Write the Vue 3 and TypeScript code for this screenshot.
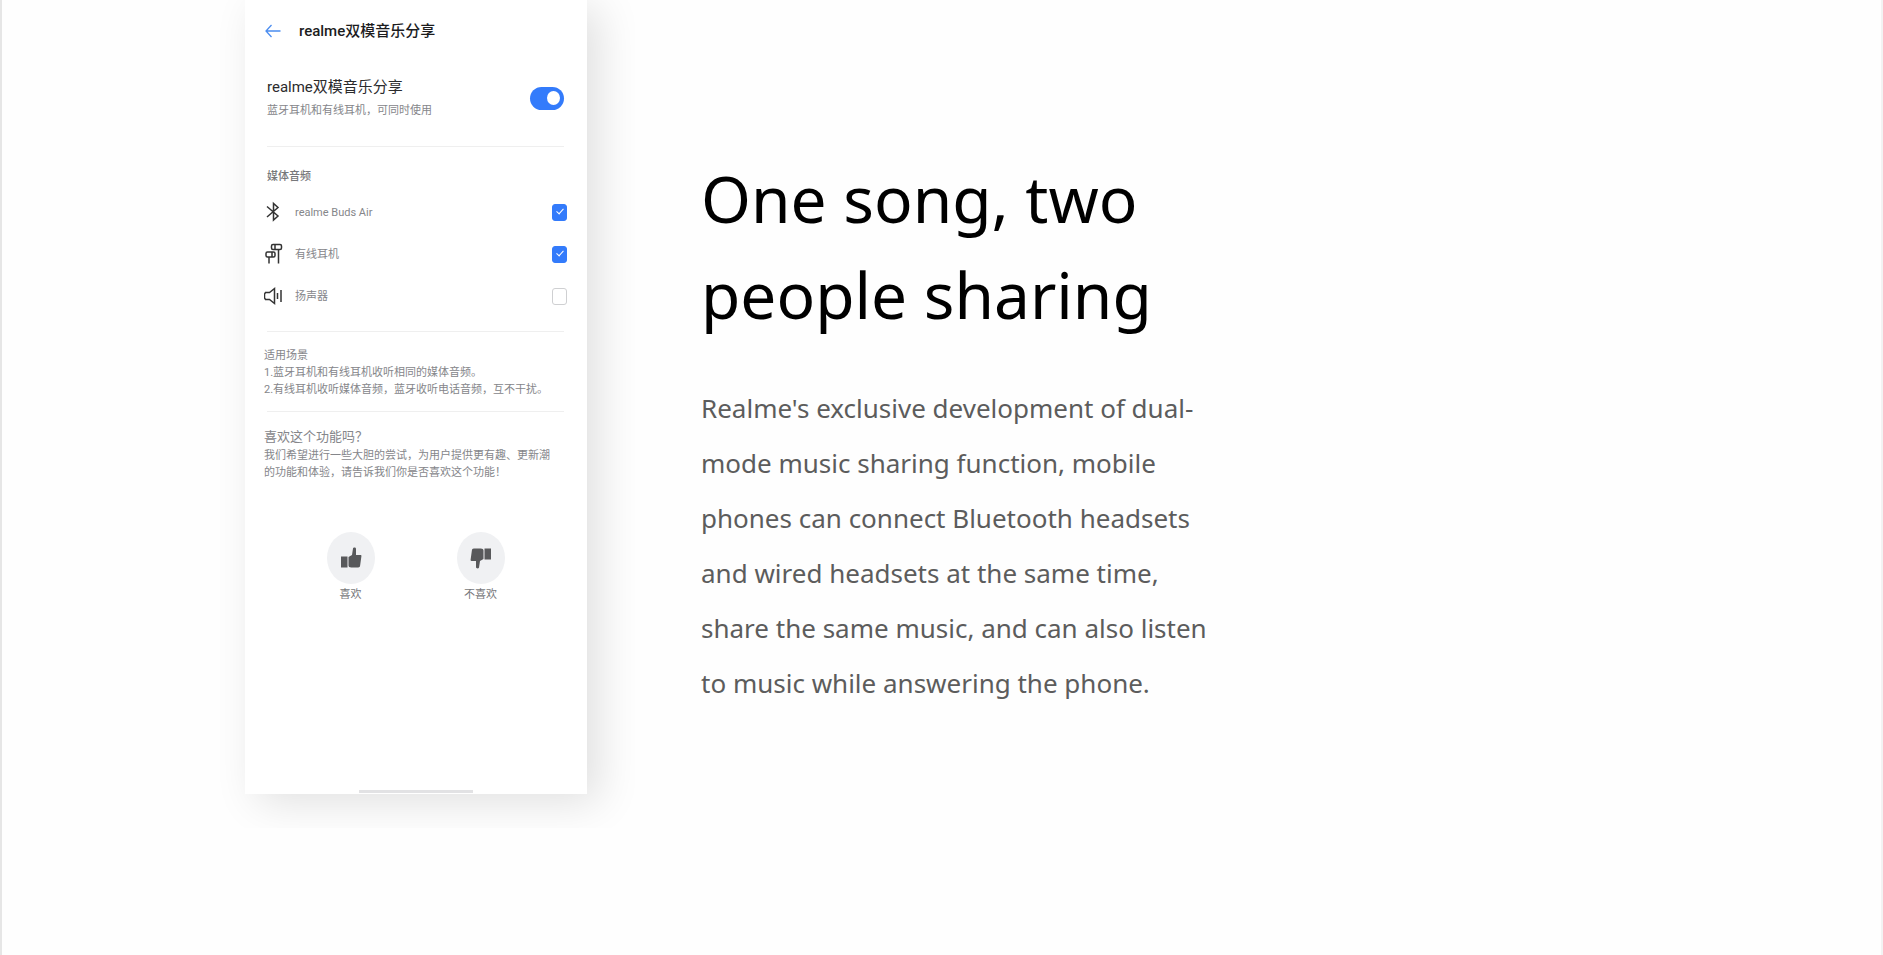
<script setup lang="ts">
import { ref } from 'vue'

type IconName = 'bluetooth' | 'wired' | 'speaker'

interface Output {
  id: string
  icon: IconName
  label: string
  on: boolean
}

const sharing = ref(true)
const outputs = ref<Output[]>([
  { id: 'buds', icon: 'bluetooth', label: 'realme Buds Air', on: true },
  { id: 'wired', icon: 'wired', label: '有线耳机', on: true },
  { id: 'speaker', icon: 'speaker', label: '扬声器', on: false },
])
</script>

<template>
  <main class="page">
    <div class="stage">
      <section class="phone" lang="zh-CN">
        <header class="bar">
          <button class="back" type="button" aria-label="返回">
            <svg viewBox="0 0 16 14" width="16" height="14">
              <path d="M15.5 7H1M6.5 1 1 7l5.500 6" fill="none" stroke="#4b8df0" stroke-width="1.300" />
            </svg>
          </button>
          <h2 class="bar-title">realme双模音乐分享</h2>
        </header>

        <div class="feature">
          <label class="feature-text" for="sharing">
            <span class="feature-title">realme双模音乐分享</span>
            <span class="small">蓝牙耳机和有线耳机，可同时使用</span>
          </label>
          <input id="sharing" v-model="sharing" class="switch" type="checkbox" role="switch" />
        </div>

        <div class="outputs">
          <h3 class="outputs-title">媒体音频</h3>
          <div v-for="o in outputs" :key="o.id" class="output">
            <svg v-if="o.icon === 'bluetooth'" class="icon" viewBox="0 0 20 22">
              <path d="M3 5.500 14 15 9.500 19V2.500L14 6.500 3 16" />
            </svg>
            <svg v-else-if="o.icon === 'wired'" class="icon" viewBox="0 0 20 22">
              <rect x="7.500" y="1.500" width="10" height="5" rx="1.500" />
              <rect x="2" y="9" width="9" height="5" rx="1.500" />
              <path d="M11 1.500v5M8 9v5M5 14v6.500M14.500 6.500v14" />
            </svg>
            <svg v-else class="icon" viewBox="0 0 20 22">
              <path d="M1.500 7.500h4L10.500 3.500v15l-5-4h-4l-1-1.500v-4zM13.500 8v6M17 5v12" />
            </svg>
            <label class="small" :for="o.id">{{ o.label }}</label>
            <input :id="o.id" v-model="o.on" class="tick" type="checkbox" />
          </div>
        </div>

        <div class="notes">
          <p>适用场景</p>
          <p>1.蓝牙耳机和有线耳机收听相同的媒体音频。</p>
          <p>2.有线耳机收听媒体音频，蓝牙收听电话音频，互不干扰。</p>
        </div>

        <div class="ask">
          <h3 class="ask-title">喜欢这个功能吗？</h3>
          <p>我们希望进行一些大胆的尝试，为用户提供更有趣、更新潮<br />的功能和体验，请告诉我们你是否喜欢这个功能！</p>
        </div>

        <div class="votes">
          <button class="vote" type="button">
            <span class="disc">
              <svg viewBox="0 0 22 22" width="22" height="22">
                <path d="M1 9.500h6.500v11H1zM8.500 10l3.500-2 1-6.500c.3-1.300 3-1.300 3 .5V8h4.500c.8 0 1 .5.900 1.200L20.200 18c-.2 1.800-.8 2.500-2 2.500h-7c-1.700 0-2.700-.8-2.700-2z" fill="#58595b" />
              </svg>
            </span>
            喜欢
          </button>
          <button class="vote" type="button">
            <span class="disc">
              <svg class="flip" viewBox="0 0 22 22" width="22" height="22">
                <path d="M1 9.500h6.500v11H1zM8.500 10l3.500-2 1-6.500c.3-1.300 3-1.300 3 .5V8h4.500c.8 0 1 .5.900 1.200L20.200 18c-.2 1.800-.8 2.500-2 2.500h-7c-1.700 0-2.700-.8-2.700-2z" fill="#58595b" />
              </svg>
            </span>
            不喜欢
          </button>
        </div>

        <div class="home"></div>
      </section>
    </div>

    <article class="copy">
      <h1>One song, two people sharing</h1>
      <p>
        Realme's exclusive development of dual-mode music sharing function, mobile phones can connect
        Bluetooth headsets and wired headsets at the same time, share the same music, and can also
        listen to music while answering the phone.
      </p>
    </article>
  </main>
</template>

<style>
body {
  background: #fefefe;
}
</style>

<style scoped>
.page {
  box-sizing: border-box;
  display: flex;
  align-items: flex-start;
  min-height: 100vh;
  padding-left: 218px;
  border-left: 2px solid #e6e6e6;
  border-right: 2px solid #f3f3f3;
  background: #fefefe;
  font-family: "Noto Sans", "Open Sans", sans-serif;
}

h1,
h2,
h3,
p {
  margin: 0;
  font-weight: 400;
}

.stage {
  flex: none;
  padding: 0 48px 34px 25px;
  overflow: hidden;
}

.phone {
  box-sizing: border-box;
  display: flex;
  flex-direction: column;
  width: 342px;
  min-height: 794px;
  padding: 0 20px 0 19px;
  background: #fff;
  box-shadow: 12px 8px 40px rgba(0, 0, 0, 0.12);
  font-family: Roboto, "Noto Sans CJK SC", sans-serif;
  font-size: 11px;
  line-height: 17px;
  color: #85868a;
}

.bar {
  display: flex;
  align-items: center;
  gap: 18px;
  height: 62px;
  padding-left: 1px;
}

.back {
  display: flex;
  padding: 0;
  border: 0;
  background: none;
}

.bar-title {
  font-size: 15px;
  font-weight: 500;
  line-height: 20px;
  color: #1c1c1e;
}

.feature {
  display: flex;
  align-items: center;
  justify-content: space-between;
  height: 85px;
  margin: 0 3px;
  padding-bottom: 12px;
  box-sizing: border-box;
  border-bottom: 1px solid #efefef;
}

.feature-text {
  display: flex;
  flex-direction: column;
  gap: 5px;
}

.feature-title {
  font-size: 15px;
  line-height: 20px;
  color: #2b2b2d;
}

.small {
  font-size: 11px;
  line-height: 17px;
}

.switch {
  appearance: none;
  display: flex;
  align-items: center;
  justify-content: flex-end;
  width: 34px;
  height: 23px;
  margin: 0;
  padding: 0 4px;
  box-sizing: border-box;
  border-radius: 12px;
  background: #d5d5d8;
}

.switch:checked {
  background: #337bfb;
}

.switch::before {
  content: "";
  width: 13px;
  height: 14px;
  border-radius: 50%;
  background: #fff;
}

.outputs {
  margin: 0 3px;
  padding: 21px 0 14px;
  border-bottom: 1px solid #efefef;
}

.outputs-title {
  font-size: 11px;
  font-weight: 500;
  line-height: 17px;
  color: #77787b;
}

.outputs-title + .output {
  margin-top: 6px;
}

.output {
  display: flex;
  align-items: center;
  height: 42px;
  margin: 0 -3px;
}

.icon {
  width: 20px;
  height: 22px;
  margin-right: 11px;
  fill: none;
  stroke: #333;
  stroke-width: 1.5;
}

.output .small {
  flex: 1;
}

.tick {
  appearance: none;
  display: flex;
  align-items: center;
  justify-content: center;
  width: 15px;
  height: 17px;
  margin: 0;
  box-sizing: border-box;
  border: 1px solid #cfd0d2;
  border-radius: 3px;
  background: #fff;
}

.tick:checked {
  border-color: #337bfb;
  background: #337bfb;
}

.tick:checked::before {
  content: "";
  width: 3px;
  height: 6px;
  margin-bottom: 3px;
  border: solid #fff;
  border-width: 0 1px 1px 0;
  transform: rotate(42deg);
}

.notes {
  display: flex;
  flex-direction: column;
  margin-right: -10px;
  padding: 15px 0 13px;
}

.ask {
  margin-right: -10px;
  padding-top: 16px;
  position: relative;
}

.ask::before {
  content: "";
  position: absolute;
  inset: 0 13px auto 3px;
  border-top: 1px solid #efefef;
}

.ask-title {
  font-size: 13px;
  line-height: 20px;
}

.votes {
  display: flex;
  justify-content: center;
  gap: 82px;
  margin-top: 51px;
}

.vote {
  display: flex;
  flex-direction: column;
  align-items: center;
  gap: 2px;
  width: 48px;
  padding: 0;
  border: 0;
  background: none;
  font: inherit;
  color: #77787b;
}

.disc {
  display: flex;
  align-items: center;
  justify-content: center;
  width: 48px;
  height: 52px;
  border-radius: 50%;
  background: #f0f1f3;
}

.flip {
  transform: rotate(180deg);
}

.home {
  width: 114px;
  height: 3px;
  margin: auto auto 1px;
  background: #e2e2e4;
}

.copy {
  width: 510px;
  padding: 151px 0 0 66px;
}

.copy h1 {
  font-size: 64px;
  line-height: 96px;
  color: #000;
}

.copy p {
  margin-top: 38px;
  font-size: 26px;
  line-height: 55px;
  color: #5c5c5c;
}
</style>
